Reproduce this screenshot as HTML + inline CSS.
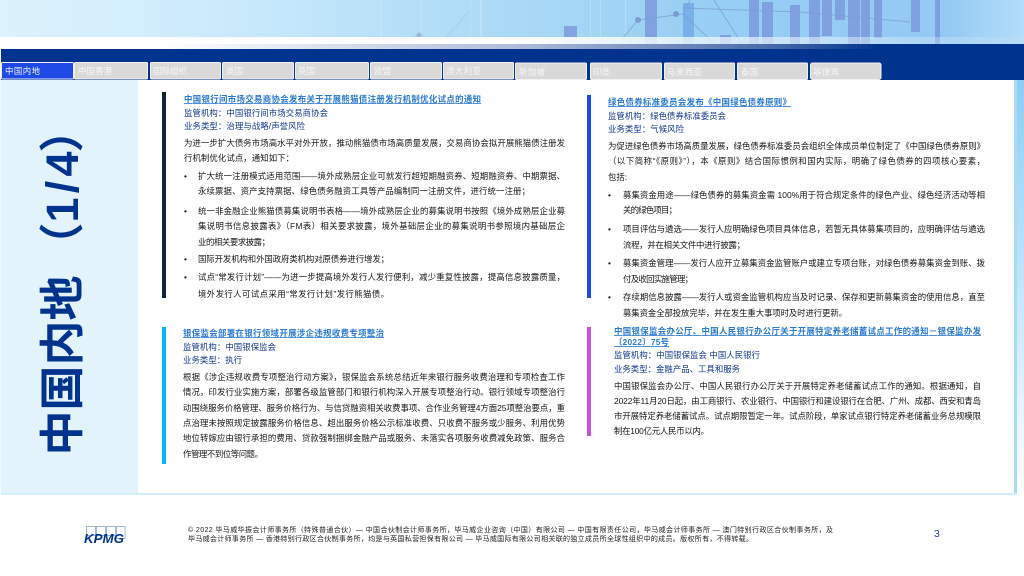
<!DOCTYPE html>
<html lang="zh"><head><meta charset="utf-8"><title>中国内地 (1/4)</title>
<style>
html,body{margin:0;padding:0;background:#fff;width:1024px;height:576px;overflow:hidden}
svg{display:block;position:absolute;left:0;top:0}
text{font-family:"Liberation Sans","Noto Sans CJK SC",sans-serif}
.b{font-size:8.4px;fill:#161616}
.m{font-size:8.4px;fill:#12368c}
.t{font-size:8.400px;fill:#2b7ad0;font-weight:700;text-decoration:underline}
.tab{font-size:8.400px;fill:#f6f6f6}
.f{font-size:7px;fill:#222}
.s{font-size:45px;font-weight:700;fill:#00338d}
</style></head><body>
<svg width="1024" height="576" viewBox="0 0 1024 576" xmlns="http://www.w3.org/2000/svg">
<defs>
<linearGradient id="sky" x1="0" x2="1" y1="0" y2="0">
<stop offset="0" stop-color="#dcf2fc"/><stop offset=".2" stop-color="#cdebfc"/><stop offset=".45" stop-color="#afdcf7"/><stop offset=".7" stop-color="#97cef4"/><stop offset=".92" stop-color="#93c9f3"/><stop offset="1" stop-color="#b3dcf8"/>
</linearGradient>
<linearGradient id="fade" x1="0" x2="1" y1="0" y2="0">
<stop offset="0" stop-color="#fff"/><stop offset=".5" stop-color="#fff"/><stop offset=".72" stop-color="#e8f3fb" stop-opacity=".75"/><stop offset="1" stop-color="#cfe6f8" stop-opacity=".2"/>
</linearGradient>
<linearGradient id="nv" x1="0" x2="1" y1="0" y2="0">
<stop offset="0" stop-color="#fff"/><stop offset=".16" stop-color="#fff"/><stop offset=".5" stop-color="#b0bedb"/><stop offset=".75" stop-color="#4a6cab"/><stop offset=".86" stop-color="#00338d"/><stop offset="1" stop-color="#00338d"/>
</linearGradient>
<linearGradient id="rs" x1="0" x2="0" y1="0" y2="1">
<stop offset="0" stop-color="#8ccdf5"/><stop offset=".6" stop-color="#cfeafb"/><stop offset="1" stop-color="#fff"/>
</linearGradient>
</defs>

<!-- header image -->
<rect x="0" y="0" width="1024" height="44" fill="url(#sky)"/>
<g fill="#cfe9f9" opacity=".45">
<rect x="350" y="0" width="1" height="37"/><rect x="380" y="0" width="2" height="37"/><rect x="420" y="0" width="2" height="37"/><rect x="470" y="0" width="1" height="37"/><rect x="480" y="0" width="2" height="37"/><rect x="590" y="0" width="1" height="44"/><rect x="600" y="0" width="1" height="44"/><rect x="625" y="0" width="1" height="44"/>
</g>
<g fill="#7b97dc" opacity=".8">
<rect x="564" y="26" width="13" height="18"/><rect x="645" y="0" width="12" height="44"/><rect x="720" y="35" width="11" height="9"/>
<rect x="749" y="0" width="10" height="44"/><rect x="762" y="2" width="11" height="42"/><rect x="790" y="5" width="10" height="39"/>
<rect x="809" y="0" width="11" height="44"/><rect x="822" y="0" width="10" height="36"/><rect x="835" y="0" width="10" height="20"/>
<rect x="848" y="0" width="12" height="44"/><rect x="861" y="0" width="9" height="44"/><rect x="874" y="0" width="8" height="38"/>
<rect x="911" y="0" width="9" height="32"/><rect x="935" y="0" width="5" height="44"/>
</g>
<rect x="683" y="3" width="11" height="41" fill="#6fa9e6" opacity=".8"/>
<g stroke="#7b9dd4" stroke-width="1" fill="none" opacity=".75">
<path d="M618 44L638 20L683 14L715 44"/><path d="M683 14L690 0"/><path d="M714 0L742 44"/><path d="M683 8L800 12L910 22"/>
</g>
<g stroke="#a9c8ea" stroke-width="1" fill="none" opacity=".7">
<path d="M400 44L418 34L440 44"/><path d="M440 44L470 10"/>
</g>
<circle cx="638" cy="20" r="3" fill="#7b9dd4"/><circle cx="676" cy="14" r="3" fill="#7b9dd4"/><circle cx="419" cy="35" r="2.500" fill="#9ab8e2"/>
<rect x="0" y="37" width="1024" height="7" fill="url(#fade)"/>
<rect x="0" y="44" width="1024" height="5" fill="url(#nv)"/>

<!-- navy bar -->
<rect x="1" y="49" width="1023" height="31" fill="#00338d"/>

<!-- content panel -->
<rect x="0" y="80" width="1024" height="430" fill="#fff"/>
<rect x="1" y="80" width="137" height="413" fill="#e3f3fb"/>
<rect x="1" y="493" width="1016" height="2" fill="#d4eefb"/>
<rect x="1014" y="80" width="3" height="413" fill="#a6dcf7"/>
<rect x="1017" y="80" width="7" height="410" fill="url(#rs)"/>
<rect x="0" y="80" width="1" height="414" fill="#eef8fd"/>

<!-- tabs -->
<g fill="#d9d9d9" stroke="#f1f1f1" stroke-width="1">
<rect x="74.500" y="62.500" width="73" height="16.500" rx="1"/>
<rect x="150.500" y="62.500" width="70" height="16.500" rx="1"/>
<rect x="222.500" y="62.500" width="71" height="16.500" rx="1"/>
<rect x="295.500" y="62.500" width="73" height="16.500" rx="1"/>
<rect x="370.500" y="62.500" width="71" height="16.500" rx="1"/>
<rect x="443.500" y="62.500" width="70" height="16.500" rx="1"/>
<rect x="515.500" y="63" width="71" height="16.500" rx="1"/>
<rect x="590.500" y="63" width="71" height="16.500" rx="1"/>
<rect x="664.500" y="63" width="70" height="16.500" rx="1"/>
<rect x="737.500" y="63" width="70" height="16.500" rx="1"/>
<rect x="810.500" y="63" width="70.500" height="16.500" rx="2"/>
</g>
<rect x="1.500" y="62.500" width="72" height="16.500" rx="1" fill="#1f49e6" stroke="#e8eefc"/>
<text class="tab" x="5" y="74" textLength="35">中国内地</text>
<text class="tab" x="78" y="74" textLength="34">中国香港</text>
<text class="tab" x="153" y="74" textLength="34">国际组织</text>
<text class="tab" x="226" y="74" textLength="17">美国</text>
<text class="tab" x="298" y="74" textLength="17">英国</text>
<text class="tab" x="374" y="74" textLength="17">欧盟</text>
<text class="tab" x="446" y="74" textLength="35">澳大利亚</text>
<text class="tab" x="519" y="75" textLength="26">新加坡</text>
<text class="tab" x="593" y="75" textLength="17">印度</text>
<text class="tab" x="667" y="75" textLength="35">马来西亚</text>
<text class="tab" x="741" y="75" textLength="17">泰国</text>
<text class="tab" x="813" y="75" textLength="26">菲律宾</text>

<!-- side title -->
<text class="s" transform="translate(78,455.500) rotate(-90)">中国内地</text>
<text class="s" transform="translate(78,267.500) rotate(-90)">（</text>
<text class="s" transform="translate(78,222.500) rotate(-90)" textLength="71">1/4</text>
<text class="s" transform="translate(78,152.500) rotate(-90)">）</text>

<!-- bars -->
<rect x="162" y="92" width="4" height="206" fill="#0c233c"/>
<rect x="162" y="327" width="4" height="137" fill="#00b8f5"/>
<rect x="587" y="95" width="4" height="203" fill="#1f4ae8"/>
<rect x="587" y="327" width="4" height="109" fill="#c455d6"/>

<!-- col 1 -->
<text class="t" x="184" y="102" textLength="297">中国银行间市场交易商协会发布关于开展熊猫债注册发行机制优化试点的通知</text>
<text class="m" x="184" y="116" textLength="144">监管机构：中国银行间市场交易商协会</text>
<text class="m" x="184" y="129" textLength="121">业务类型：治理与战略/声誉风险</text>
<text class="b" x="184" y="146" textLength="381">为进一步扩大债务市场高水平对外开放，推动熊猫债市场高质量发展，交易商协会拟开展熊猫债注册发</text>
<text class="b" x="184" y="161" textLength="110">行机制优化试点，通知如下：</text>
<text class="b" x="184" y="179">•</text>
<text class="b" x="198" y="179" textLength="367">扩大统一注册模式适用范围——境外成熟层企业可就发行超短期融资券、短期融资券、中期票据、</text>
<text class="b" x="198" y="194" textLength="332">永续票据、资产支持票据、绿色债务融资工具等产品编制同一注册文件，进行统一注册；</text>
<text class="b" x="184" y="214">•</text>
<text class="b" x="198" y="214" textLength="367">统一非金融企业熊猫债募集说明书表格——境外成熟层企业的募集说明书按照《境外成熟层企业募</text>
<text class="b" x="198" y="229" textLength="367">集说明书信息披露表》（FM表）相关要求披露，境外基础层企业的募集说明书参照境内基础层企</text>
<text class="b" x="198" y="245" textLength="72">业的相关要求披露；</text>
<text class="b" x="184" y="262">•</text>
<text class="b" x="198" y="262" textLength="191">国际开发机构和外国政府类机构对原债券进行增发；</text>
<text class="b" x="184" y="280">•</text>
<text class="b" x="198" y="280" textLength="367">试点“常发行计划”——为进一步提高境外发行人发行便利，减少重复性披露，提高信息披露质量，</text>
<text class="b" x="198" y="297" textLength="191">境外发行人可试点采用“常发行计划”发行熊猫债。</text>

<!-- col 1 lower -->
<text class="t" x="183" y="336" textLength="201">银保监会部署在银行领域开展涉企违规收费专项整治</text>
<text class="m" x="183" y="350" textLength="93">监管机构：中国银保监会</text>
<text class="m" x="183" y="363" textLength="59">业务类型：执行</text>
<text class="b" x="183" y="380" textLength="382">根据《涉企违规收费专项整治行动方案》，银保监会系统总结近年来银行服务收费治理和专项检查工作</text>
<text class="b" x="183" y="395" textLength="382">情况，印发行业实施方案，部署各级监管部门和银行机构深入开展专项整治行动。银行领域专项整治行</text>
<text class="b" x="183" y="411" textLength="382">动围绕服务价格管理、服务价格行为、与信贷融资相关收费事项、合作业务管理4方面25项整治要点，重</text>
<text class="b" x="183" y="426" textLength="382">点治理未按照规定披露服务价格信息、超出服务价格公示标准收费、只收费不服务或少服务、利用优势</text>
<text class="b" x="183" y="441" textLength="382">地位转嫁应由银行承担的费用、贷款强制捆绑金融产品或服务、未落实各项服务收费减免政策、服务合</text>
<text class="b" x="183" y="457" textLength="80">作管理不到位等问题。</text>

<!-- col 2 -->
<text class="t" x="608" y="105" textLength="183">绿色债券标准委员会发布《中国绿色债券原则》</text>
<text class="m" x="608" y="119" textLength="118">监管机构：绿色债券标准委员会</text>
<text class="m" x="608" y="132" textLength="76">业务类型：气候风险</text>
<text class="b" x="608" y="149" textLength="377">为促进绿色债券市场高质量发展，绿色债券标准委员会组织全体成员单位制定了《中国绿色债券原则》</text>
<text class="b" x="608" y="164" textLength="377">（以下简称“《原则》”），本《原则》结合国际惯例和国内实际，明确了绿色债券的四项核心要素，</text>
<text class="b" x="608" y="180">包括:</text>
<text class="b" x="608" y="198">•</text>
<text class="b" x="623" y="198" textLength="362">募集资金用途——绿色债券的募集资金需 100%用于符合规定条件的绿色产业、绿色经济活动等相</text>
<text class="b" x="623" y="213" textLength="54">关的绿色项目；</text>
<text class="b" x="608" y="232">•</text>
<text class="b" x="623" y="232" textLength="362">项目评估与遴选——发行人应明确绿色项目具体信息，若暂无具体募集项目的，应明确评估与遴选</text>
<text class="b" x="623" y="248" textLength="122">流程，并在相关文件中进行披露；</text>
<text class="b" x="608" y="266">•</text>
<text class="b" x="623" y="266" textLength="362">募集资金管理——发行人应开立募集资金监管账户或建立专项台账，对绿色债券募集资金到账、拨</text>
<text class="b" x="623" y="282" textLength="70">付及收回实施管理；</text>
<text class="b" x="608" y="300">•</text>
<text class="b" x="623" y="300" textLength="362">存续期信息披露——发行人或资金监管机构应当及时记录、保存和更新募集资金的使用信息，直至</text>
<text class="b" x="623" y="316" textLength="224">募集资金全部投放完毕，并在发生重大事项时及时进行更新。</text>

<!-- col 2 lower -->
<text class="t" x="614" y="334" textLength="367">中国银保监会办公厅、中国人民银行办公厅关于开展特定养老储蓄试点工作的通知－银保监办发</text>
<text class="t" x="614" y="345" textLength="55">〔2022〕75号</text>
<text class="m" x="614" y="358" textLength="146">监管机构：中国银保监会 中国人民银行</text>
<text class="m" x="614" y="372" textLength="126">业务类型：金融产品、工具和服务</text>
<text class="b" x="614" y="389" textLength="367">中国银保监会办公厅、中国人民银行办公厅关于开展特定养老储蓄试点工作的通知。根据通知，自</text>
<text class="b" x="614" y="404" textLength="367">2022年11月20日起，由工商银行、农业银行、中国银行和建设银行在合肥、广州、成都、西安和青岛</text>
<text class="b" x="614" y="419" textLength="367">市开展特定养老储蓄试点。试点期限暂定一年。试点阶段，单家试点银行特定养老储蓄业务总规模限</text>
<text class="b" x="614" y="434" textLength="95">制在100亿元人民币以内。</text>

<!-- footer -->
<g fill="none" stroke="#8fa6d2" stroke-width=".8">
<rect x="86.500" y="526.500" width="9" height="9"/><rect x="96.500" y="526.500" width="9" height="9"/><rect x="106.500" y="526.500" width="9" height="9"/><rect x="116.500" y="526.500" width="8.500" height="12"/>
</g>
<text x="84" y="543" style="font-size:12.500px;font-weight:700;font-style:italic;fill:#00338d" textLength="40" lengthAdjust="spacingAndGlyphs">KPMG</text>
<text class="f" x="188" y="532" textLength="645">© 2022 毕马威华振会计师事务所（特殊普通合伙）— 中国合伙制会计师事务所，毕马威企业咨询（中国）有限公司 — 中国有限责任公司，毕马威会计师事务所 — 澳门特别行政区合伙制事务所，及</text>
<text class="f" x="188" y="541" textLength="565">毕马威会计师事务所 — 香港特别行政区合伙制事务所，均是与英国私营担保有限公司 — 毕马威国际有限公司相关联的独立成员所全球性组织中的成员。版权所有，不得转载。</text>
<text x="934" y="537" style="font-size:10.500px;fill:#1c3f94">3</text>
</svg>
</body></html>
